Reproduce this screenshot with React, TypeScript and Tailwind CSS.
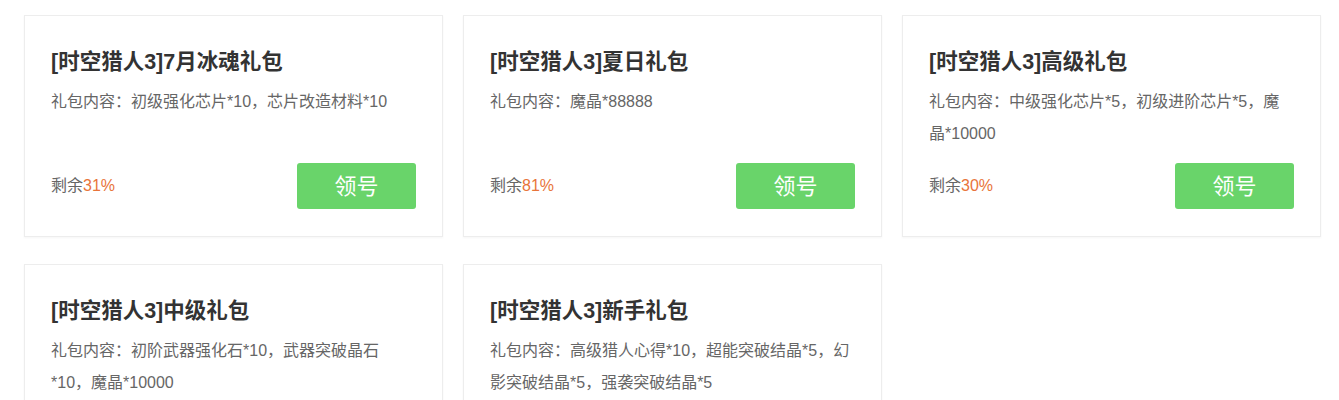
const gifts = [
  { id: 1, title: "[时空猎人3]7月冰魂礼包", content: "初级强化芯片*10，芯片改造材料*10", left: "31%" },
  { id: 2, title: "[时空猎人3]夏日礼包", content: "魔晶*88888", left: "81%" },
  { id: 3, title: "[时空猎人3]高级礼包", content: "中级强化芯片*5，初级进阶芯片*5，魔晶*10000", left: "30%" },
  { id: 4, title: "[时空猎人3]中级礼包", content: "初阶武器强化石*10，武器突破晶石*10，魔晶*10000", left: "52%" },
  { id: 5, title: "[时空猎人3]新手礼包", content: "高级猎人心得*10，超能突破结晶*5，幻影突破结晶*5，强袭突破结晶*5", left: "64%" },
];

export default function App() {
  return (
    <div className="min-h-screen bg-white font-['Liberation_Sans','Noto_Sans_CJK_SC',sans-serif]">
      <div className="grid grid-cols-[repeat(3,419px)] gap-x-[20px] gap-y-[27px] pl-[24px] pt-[15px] pb-10">
        {gifts.map((gift) => (
          <div
            key={gift.id}
            className="flex h-[222px] flex-col border border-[#ededed] bg-white pt-[32px] pr-[26px] pb-[27px] pl-[26px] shadow-[0_1px_2px_rgba(0,0,0,0.04)]"
          >
            <h3 className="text-[21.5px] font-bold leading-[28px] text-[#333]">{gift.title}</h3>
            <p className="mt-[10px] w-[360px] text-[16px] leading-[32px] text-[#666]">
              礼包内容：{gift.content}
            </p>
            <div className="mt-auto flex items-center justify-between">
              <span className="text-[16px] text-[#666]">
                剩余<span className="text-[#e8743b]">{gift.left}</span>
              </span>
              <button className="h-[46px] w-[119px] rounded-[3px] bg-[#69d46a] text-[22px] text-white">
                领号
              </button>
            </div>
          </div>
        ))}
      </div>
    </div>
  );
}
